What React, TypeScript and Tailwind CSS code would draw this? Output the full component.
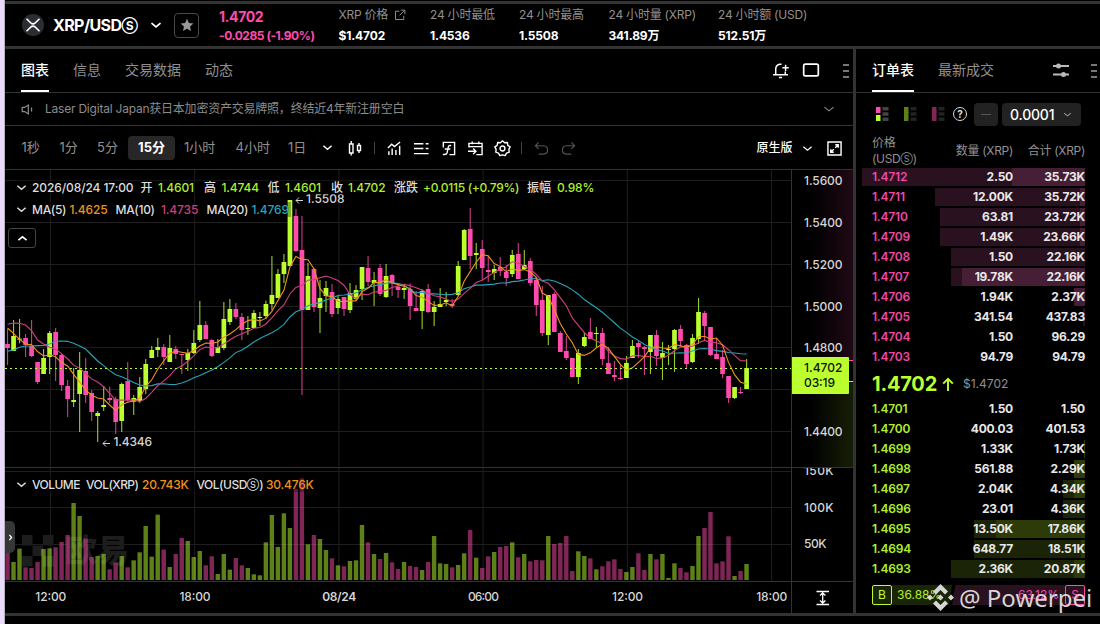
import type { ReactNode } from "react";

type Candle = [dir: "u" | "d", top: number, bottom: number, high: number, low: number];

const UP = "#bcff2f";
const DOWN = "#ff4bae";

// Units are thirds of a pixel, measured from each segment's own base line.
const SEGMENTS: { base: number; rows: Candle[] }[] = [
    { base: 390, rows: [
        ["d", 132, 144, 88, 195], ["u", 108, 153, 60, 153], ["u", 116, 119, 57, 130], ["d", 114, 135, 102, 171], ["d", 138, 168, 60, 171],
        ["d", 186, 246, 186, 252], ["u", 174, 222, 147, 222], ["u", 99, 171, 93, 222], ["d", 96, 165, 84, 243], ["d", 165, 255, 160, 273],
        ["d", 258, 297, 240, 351], ["u", 300, 306, 204, 321], ["u", 210, 282, 156, 396], ["d", 213, 285, 174, 309], ["d", 279, 336, 270, 363],
        ["u", 339, 348, 333, 426], ["u", 315, 321, 258, 333], ["d", 294, 300, 260, 309], ["d", 297, 366, 290, 402], ["u", 252, 363, 248, 396],
        ["d", 243, 300, 186, 305], ["u", 294, 305, 285, 345], ["u", 261, 303, 231, 309], ["u", 192, 267, 177, 282], ["u", 150, 174, 138, 174],
        ["u", 141, 150, 114, 171], ["d", 141, 171, 132, 195], ["u", 144, 186, 105, 186], ["d", 147, 162, 138, 177], ["d", 162, 165, 162, 222],
        ["u", 159, 180, 147, 213], ["u", 129, 159, 90, 162], ["u", 75, 120, 3, 126], ["d", 75, 117, 63, 117], ["d", 120, 168, 117, 171],
        ["u", 141, 159, 117, 159], ["u", 57, 144, 6, 150], ["u", 27, 66, -3, 75], ["d", 27, 51, 9, 57], ["d", 51, 90, 39, 120],
        ["u", 84, 87, 48, 105], ["u", 39, 84, 30, 84],
    ] },
    { base: 30, rows: [
        ["u", 411, 414, 396, 438], ["u", 372, 408, 362, 417], ["u", 345, 372, 228, 390], ["u", 282, 354, 267, 354], ["u", 246, 282, 222, 309],
        ["u", 60, 258, 60, 258], ["d", 108, 213, 87, 216], ["d", 210, 390, 108, 645], ["u", 288, 390, 249, 390], ["d", 267, 381, 264, 396],
        ["u", 354, 384, 300, 459], ["u", 324, 348, 303, 396], ["d", 336, 402, 312, 411], ["u", 357, 384, 345, 402], ["d", 351, 387, 351, 408],
        ["u", 339, 390, 309, 399], ["u", 330, 357, 315, 363], ["u", 261, 327, 261, 360], ["d", 264, 306, 228, 318], ["u", 300, 309, 276, 378],
        ["d", 264, 342, 252, 348], ["u", 288, 351, 252, 354], ["d", 285, 309, 282, 348], ["d", 321, 330, 315, 354], ["u", 324, 330, 315, 357],
        ["d", 327, 378, 310, 420], ["d", 384, 393, 333, 393], ["u", 333, 393, 327, 447], ["d", 327, 396, 312, 399], ["u", 381, 396, 363, 438],
        ["u", 372, 381, 324, 381], ["u", 360, 366, 336, 378], ["d", 372, 378, 357, 384], ["u", 258, 345, 243, 348], ["u", 150, 240, 147, 240],
        ["d", 147, 228, 84, 267], ["u", 219, 225, 189, 267], ["d", 207, 264, 180, 300], ["d", 270, 276, 228, 306], ["u", 267, 279, 255, 300],
        ["d", 261, 273, 231, 288], ["d", 276, 294, 255, 318],
    ] },
    { base: 90, rows: [
        ["u", 165, 222, 150, 231], ["d", 162, 237, 129, 237], ["u", 195, 207, 150, 210], ["d", 183, 249, 174, 258], ["d", 240, 315, 230, 348],
        ["d", 300, 399, 258, 408], ["u", 285, 405, 285, 435], ["d", 282, 396, 276, 396], ["d", 399, 456, 393, 456], ["d", 453, 474, 408, 480],
        ["d", 474, 531, 474, 531], ["u", 459, 531, 447, 552], ["u", 411, 438, 396, 441], ["d", 396, 417, 354, 417], ["u", 399, 402, 381, 441],
        ["d", 399, 477, 384, 495], ["d", 489, 522, 441, 522], ["d", 525, 531, 483, 543], ["d", 534, 537, 495, 540], ["u", 489, 534, 468, 534],
        ["u", 438, 474, 420, 474], ["d", 429, 441, 420, 474], ["d", 441, 447, 438, 525], ["u", 405, 456, 405, 522], ["d", 405, 468, 390, 498],
        ["u", 459, 474, 426, 540], ["u", 447, 450, 435, 495], ["u", 390, 447, 387, 516], ["d", 387, 423, 375, 441], ["d", 435, 492, 432, 504],
        ["u", 414, 486, 402, 489], ["u", 336, 417, 294, 432], ["d", 339, 378, 333, 423], ["d", 381, 465, 381, 468], ["d", 462, 477, 414, 477],
        ["d", 471, 522, 450, 534], ["d", 528, 594, 528, 609], ["u", 561, 594, 561, 597], ["d", 576, 579, 561, 582], ["u", 504, 567, 477, 567],
    ] },
];

// bar heights, also in thirds of a pixel
const VOLUMES = [
    84, 54, 94, 38, 36, 54, 93, 95, 98, 114, 135, 231, 192, 124, 69, 72, 78, 32, 52, 72, 38, 59, 83, 162, 70, 196, 91, 39, 78, 126, 117, 69,
    87, 44, 71, 18, 78, 31, 66, 44, 36, 17, 14, 113, 195, 99, 200, 156, 273, 305, 107, 135, 123, 90, 65, 44, 41, 57, 59, 165, 113, 78, 63, 81,
    53, 33, 54, 42, 39, 30, 54, 132, 50, 48, 38, 45, 80, 150, 67, 36, 71, 84, 99, 102, 113, 68, 78, 56, 60, 59, 132, 108, 111, 132, 27, 86,
    72, 65, 32, 41, 56, 62, 33, 24, 39, 80, 30, 78, 62, 78, 6, 50, 36, 23, 42, 132, 156, 204, 50, 56, 131, 12, 27, 48,
];

const CANDLES = SEGMENTS.flatMap(({ base, rows }) =>
    rows.map(([dir, t, b, h, l]) => ({ dir, top: (t + base) / 3, bottom: (b + base) / 3, high: (h + base) / 3, low: (l + base) / 3 })),
);

const xAt = (i: number) => 2.5 + i * 6.0085;

// The first points of each average depend on candles left of the window.
const MA5_HEAD = [84, 100, 118, 132];
const MA10_HEAD = [73, 69, 70, 75, 92, 120, 132, 142, 148];
const MA20_HEAD = [154, 150, 142, 138, 138, 137, 136, 132, 124, 123, 124, 130, 138, 147, 165, 183, 197, 212, 224];

function average(n: number, head: number[]) {
    return CANDLES.map((_, i) => {
        if (i < n - 1) return `${xAt(i)},${(head[i] + 390) / 3}`;
        const window = CANDLES.slice(i - n + 1, i + 1);
        const y = window.reduce((s, c) => s + (c.dir === "u" ? c.top : c.bottom), 0) / n;
        return `${xAt(i)},${y}`;
    }).join(" ");
}

const PRICE_TICKS = [
    { y: 10.5, label: "1.5600" }, { y: 52.5, label: "1.5400" }, { y: 94.5, label: "1.5200" }, { y: 136.5, label: "1.5000" },
    { y: 177.5, label: "1.4800" }, { y: 219.5, label: "" }, { y: 261.5, label: "1.4400" },
];
const VOL_TICKS = [{ y: 301.5, label: "150K" }, { y: 337.5, label: "100K" }, { y: 374.5, label: "50K" }];
const TIME_TICKS = ["12:00", "18:00", "08/24", "06:00", "12:00", "18:00"];

function Icon({ size = 16, sw = 1.5, className = "", children }: { size?: number; sw?: number; className?: string; children: ReactNode }) {
    return (
        <svg width={size} height={size} viewBox="0 0 16 16" fill="none" stroke="currentColor" strokeWidth={sw} className={`shrink-0 ${className}`}>{children}</svg>
    );
}

function Chevron({ className = "", size = 12, sw = 2 }: { className?: string; size?: number; sw?: number }) {
    return <Icon size={size} sw={sw} className={className}><path d="M2 5.5l6 5 6-5" /></Icon>;
}

// the circled S is far larger than its neighbours at the same font size
function Usd() {
    return <>USD<span className="inline-block align-[0.06em] text-[0.74em] leading-none tracking-normal">Ⓢ</span></>;
}

function Grip() {
    return (
        <div className="flex w-1.5 shrink-0 flex-col gap-1">
            <i className="h-0.5 bg-[#777]" /><i className="h-0.5 bg-[#777]" /><i className="h-0.5 bg-[#777]" />
        </div>
    );
}

function Stat({ label, value, w, link }: { label: string; value: string; w: string; link?: boolean }) {
    return (
        <div className={`shrink-0 ${w}`}>
            <div className="flex h-5 items-center gap-1.5 text-[12px] tracking-[-0.22px] text-[#909090]">
                {label}
                {link && <Icon size={12} sw={1.3}><path d="M7 3H2v11h11V9M9 1.5h5.5V7M14 2L7.5 8.5" /></Icon>}
            </div>
            <div className="h-5 text-[12px] leading-[21px] font-bold tracking-[-0.15px] text-white">{value}</div>
        </div>
    );
}

function Header() {
    return (
        <header className="flex h-[42px] items-center pl-[17px]">
            <svg width="22" height="22" viewBox="0 0 22 22" className="shrink-0">
                <circle cx="11" cy="11" r="11" fill="#2b2d33" />
                <path d="M4.5 4.8l4.2 4.1q2.3 2 4.6 0l4.2-4.1M4.5 17.2l4.2-4.1q2.3-2 4.6 0l4.2 4.1" fill="none" stroke="#fff" strokeWidth="1.5" />
            </svg>
            <div className="ml-[9px] w-[97px] text-[16px] font-bold tracking-[-0.6px] whitespace-nowrap text-white">XRP/<Usd /></div>
            <Chevron className="text-white" size={12} sw={2.4} />
            <div className="ml-3 flex size-[25px] shrink-0 items-center justify-center rounded border border-[#484848]">
                <svg width="14" height="14" viewBox="0 0 16 16" fill="#999"><path d="M8 .8l2.2 4.8 5.1.6-3.8 3.5 1 5.2L8 12.3l-4.5 2.6 1-5.2L.7 6.2l5.1-.6z" /></svg>
            </div>
            <div className="ml-5 w-[119.5px] shrink-0 font-bold text-[#ff4bae]">
                <div className="h-5 text-[14px] leading-[23px] tracking-[-0.35px]">1.4702</div>
                <div className="h-5 text-[12px] leading-[21px] tracking-[-0.45px]">-0.0285 (-1.90%)</div>
            </div>
            <Stat w="w-[91.5px]" label="XRP 价格" value="$1.4702" link />
            <Stat w="w-[89px]" label="24 小时最低" value="1.4536" />
            <Stat w="w-[89.5px]" label="24 小时最高" value="1.5508" />
            <Stat w="w-[109.5px]" label="24 小时量 (XRP)" value="341.89万" />
            <Stat w="w-[100px]" label="24 小时额 (USD)" value="512.51万" />
        </header>
    );
}

function ChartTabs() {
    return (
        <div className="flex h-[44px] items-center border-b border-[#333] pl-4 text-[14px] text-[#909090]">
            <div className="flex h-full w-7 items-center border-b-2 border-white font-medium text-white">图表</div>
            <div className="mb-[3px] ml-6">信息</div>
            <div className="mb-[3px] ml-6">交易数据</div>
            <div className="mb-[3px] ml-6">动态</div>
            <div className="mr-1 ml-auto flex items-center text-white">
                <Icon size={17} sw={1.4} className="-mt-px"><path d="M9 2.200C5.500 1.500 3.500 4 3.500 6.500V12M12.500 9v3M1 12h14M6.500 14.500h3M12.800 2.500v6M9.800 5.500h6" /></Icon>
                <Icon size={18} sw={1.5} className="-mt-px ml-[13px]"><rect x="1.5" y="2.7" width="13" height="10.6" rx="1.5" /></Icon>
                <div className="ml-[23px]"><Grip /></div>
            </div>
        </div>
    );
}

function Notice() {
    return (
        <div className="flex h-[33px] items-center border-b border-[#333] pl-4 text-[#8c8c8c]">
            <Icon size={13} sw={1.5}><path d="M1.500 5.500h3l4.500-3v11l-4.500-3h-3zM13 5.500v5" /></Icon>
            <span className="ml-[11px] text-[12px] tracking-[-0.22px]">Laser Digital Japan获日本加密资产交易牌照，终结近4年新注册空白</span>
            <Chevron className="mr-[18px] ml-auto" size={12} sw={1.5} />
        </div>
    );
}

function Toolbar() {
    return (
        <div className="flex h-[44px] items-center border-b border-[#333] text-[13px] text-[#909090]">
            <span className="box-content w-[38px] pl-[16.5px]">1秒</span>
            <span className="w-[37.5px]">1分</span>
            <span className="w-[31px]">5分</span>
            <span className="flex h-6 w-[47px] items-center justify-center rounded bg-[#272727] font-bold text-white">15分</span>
            <span className="box-content w-[51.5px] pl-[9px]">1小时</span>
            <span className="w-[52.5px]">4小时</span>
            <span className="w-[34px]">1日</span>
            <Chevron className="text-white" size={11} sw={2.2} />
            <div className="mt-px ml-[14px] flex items-center text-white">
                <Icon size={16} sw={1.4}><path d="M2.500 4h3.500v9H2.500zM4.200 1v3M4.200 13v2.500M10.500 5.500h3v5h-3zM12 3v2.500M12 10.500V13" /></Icon>
                <i className="mr-3 ml-[11px] h-3 w-px bg-[#444]" />
                <Icon size={15}><path d="M1 7.500l4-4 3 2.500 6-5M2 15v-4M5.500 15V8M9.500 15V9.500M13.500 15V5" /></Icon>
                <Icon size={15} className="ml-3"><path d="M0 3h10M12.500 3h3M0 8h10M12.500 8h3M0 13.500h15.500" /></Icon>
                <Icon size={15} className="ml-3"><path d="M2.500 7V1.500h12v13H9M10.800 5q-2.500-.8-3 1.500L6.500 12.500q-.8 2.500-4.500 1.700M4 8.500h6" /></Icon>
                <Icon size={15} className="ml-3"><path d="M1 7V2.500h14v12H9M4.500 .5v3M11.500 .5v3M1 6h14M0 11h8M5.500 8l3 3-3 3" /></Icon>
                <Icon size={17} sw={1.3} className="ml-[11px]">
                    <path d="M8 .8l2 1.800 2.600-.2.400 2.600 2.200 1.500L14 8.800l.300 2.700-2.500.900-1.300 2.300L8 14l-2.500.700-1.300-2.300-2.500-.900.300-2.700L.8 6.500 3 5l.4-2.600 2.600.2z" strokeLinejoin="round" />
                    <circle cx="8" cy="8" r="2.300" />
                </Icon>
                <i className="mr-3 ml-2.5 h-3 w-px bg-[#444]" />
                <Icon size={15} sw={1.2} className="text-[#555]"><path d="M5 1.500L1.500 5 5 8.500M1.500 5H10q4.500.3 4.500 4.500T10 14H5" /></Icon>
                <Icon size={15} sw={1.2} className="ml-3 text-[#555]"><path d="M11 1.500L14.500 5 11 8.500M14.500 5H6q-4.500.3-4.500 4.500T6 14h5" /></Icon>
            </div>
            <div className="mt-px mr-[11.5px] ml-auto flex items-center text-white">
                <span className="text-[12px] font-medium">原生版</span>
                <Chevron className="ml-[9px]" size={11} sw={1.8} />
                <Icon size={15} className="ml-[14px]" sw={1.5}><path d="M1 1h14v14H1zM8.800 4h3.200v3.200M12 4L8.800 7.200M7.200 12H4V8.800M4 12l3.200-3.200" /></Icon>
            </div>
        </div>
    );
}

type Cell = { t: ReactNode; w: string; c?: string };

function Legend({ cells }: { cells: Cell[] }) {
    return (
        <div className="flex h-[15px] w-max items-center bg-black/30 text-[12px] font-medium whitespace-nowrap text-[#dedede]">
            <Chevron size={11} sw={2.2} className="mr-[5.500px]" />
            {cells.map(({ t, w, c = "" }, i) => <span key={i} className={`${w} ${c}`}>{t}</span>)}
        </div>
    );
}

const G = "tracking-[-0.15px] text-[#b0ee2e]";

function Chart() {
    return (
        <div className="relative h-[443px]">
            <svg width="848" height="443" viewBox="0 0 848 443" className="block">
                <defs>
                    <linearGradient id="ask"><stop offset="0.3" stopColor={DOWN} stopOpacity="0" /><stop offset="1" stopColor={DOWN} stopOpacity="0.12" /></linearGradient>
                    <linearGradient id="bid"><stop offset="0.3" stopColor={UP} stopOpacity="0" /><stop offset="1" stopColor={UP} stopOpacity="0.12" /></linearGradient>
                </defs>
                <rect x="787" width="61" height="191" fill="url(#ask)" />
                <rect x="787" y="211" width="61" height="86" fill="url(#bid)" />
                <path d="M844 190.500h4" stroke={DOWN} />
                <path d="M844 211.500h4" stroke={UP} />

                <g stroke="#1e1e1e">
                    {[...PRICE_TICKS, ...VOL_TICKS].map(({ y }) => <path key={y} d={`M0 ${y}H786`} />)}
                    {TIME_TICKS.map((_, k) => <path key={k} d={`M${45.5 + k * 144.2} 0V411`} />)}
                </g>

                <g fill="#1d1d1d">
                    <path d="M17 365h10.500v10.500H17zM38 365h10.500v10.500H38zM27.500 375.500H38V386H27.500zM17 386h10.500v10.500H17zM38 386h10.500v10.500H38z" />
                    <text x="60" y="392" fontSize="32" fontWeight="900">欧易</text>
                </g>

                {CANDLES.map((c, i) => (
                    <rect key={i} x={xAt(i) - 2.2} y={410 - VOLUMES[i] / 3} width="4.4" height={VOLUMES[i] / 3} fill={c.dir === "u" ? UP : DOWN} opacity="0.5" />
                ))}

                <path d="M0 297.500H848M0 411.500H848M786.500 0V443" stroke="#333" />

                {CANDLES.map((c, i) => (
                    <g key={i} fill={c.dir === "u" ? UP : DOWN}>
                        <rect x={xAt(i) - 0.5} y={c.high} width="1.1" height={c.low - c.high} opacity="0.8" />
                        <rect x={xAt(i) - 2.3} y={c.top} width="4.7" height={Math.max(1, c.bottom - c.top)} />
                    </g>
                ))}

                <g fill="none" strokeWidth="1.1">
                    <polyline points={average(20, MA20_HEAD)} stroke="#24a5b8" />
                    <polyline points={average(10, MA10_HEAD)} stroke="#cf3f7c" />
                    <polyline points={average(5, MA5_HEAD)} stroke="#f0931e" />
                </g>
                <path d="M0 198.500H786" stroke={UP} strokeDasharray="2 3" />

                <g fill="#d6d6d6" fontSize="12" fontWeight="500">
                    <path d="M291 30.500h7M294 27.500l-3 3 3 3M98 273.500h7M101 270.500l-3 3 3 3" fill="none" stroke="#d6d6d6" />
                    <text x="301" y="33" textLength="38.500">1.5508</text>
                    <text x="108.500" y="276" textLength="38.500">1.4346</text>
                    {PRICE_TICKS.map(({ y, label }) => <text key={y} x="799" y={y + 4.500} textLength="38.500">{label}</text>)}
                    <text x="799" y="342" textLength="29.500">100K</text>
                    <text x="799" y="378" textLength="22.500">50K</text>
                    <clipPath id="volClip"><path d="M787 298h61v50h-61z" /></clipPath>
                    <text x="799" y="305" textLength="29.500" clipPath="url(#volClip)">150K</text>
                    {TIME_TICKS.map((t, k) => <text key={k} x={45.8 + k * 144.2} y="431" textAnchor="middle" textLength={k === 2 ? 34 : 31} fontWeight={k === 2 ? 600 : 500}>{t}</text>)}
                </g>

                <path d="M787 187h56a1 1 0 0 1 1 1v35a1 1 0 0 1-1 1h-56z" fill={UP} />
                <g fill="#111" fontSize="12" fontWeight="500">
                    <text x="799" y="202" textLength="38.500">1.4702</text>
                    <text x="799" y="217" textLength="31">03:19</text>
                </g>
                <path d="M811.500 421.500h12.500M811.500 434.500h12.500M817.700 423v10M815 425.500l2.700-2.500 2.700 2.500M815 430.500l2.700 2.500 2.700-2.500" stroke="#fff" strokeWidth="1.300" fill="none" />
            </svg>

            <div className="absolute top-[10px] left-[10.5px]">
                <Legend cells={[
                    { t: "2026/08/24 17:00", w: "w-[108.5px] tracking-[-0.1px]" }, { t: "开", w: "w-[17.5px]" }, { t: "1.4601", w: "w-[46px]", c: G },
                    { t: "高", w: "w-[17.5px]" }, { t: "1.4744", w: "w-[46px]", c: G }, { t: "低", w: "w-[17.5px]" }, { t: "1.4601", w: "w-[46px]", c: G },
                    { t: "收", w: "w-[17px]" }, { t: "1.4702", w: "w-[46px]", c: G }, { t: "涨跌", w: "w-[29px]" },
                    { t: "+0.0115 (+0.79%)", w: "w-[104px]", c: "tracking-[-0.3px] text-[#b0ee2e]" }, { t: "振幅", w: "w-[30px]" }, { t: "0.98%", w: "w-[40px]", c: G },
                ]} />
            </div>
            <div className="absolute top-[32px] left-[10.5px]">
                <Legend cells={[
                    { t: "MA(5)", w: "w-[37.500px] tracking-[-0.3px]" }, { t: "1.4625", w: "w-[46px]", c: "tracking-[-0.15px] text-[#f0931e]" },
                    { t: "MA(10)", w: "w-[45.5px] tracking-[-0.3px]" }, { t: "1.4735", w: "w-[45.5px]", c: "tracking-[-0.15px] text-[#cf3f7c]" },
                    { t: "MA(20)", w: "w-[45px] tracking-[-0.3px]" }, { t: "1.4769", w: "w-[39px]", c: "tracking-[-0.15px] text-[#24a5b8]" },
                ]} />
            </div>
            <div className="absolute top-[307px] left-[10.5px]">
                <Legend cells={[
                    { t: "VOLUME", w: "w-[54px] tracking-[-0.55px]" }, { t: "VOL(XRP)", w: "w-[56px] tracking-[-0.55px]" }, { t: "20.743K", w: "w-[54.5px]", c: "tracking-[-0.2px] text-[#f0931e]" },
                    { t: <>VOL(<Usd />)</>, w: "w-[69.5px] tracking-[-0.5px]" }, { t: "30.476K", w: "w-[48px]", c: "tracking-[-0.2px] text-[#f0931e]" },
                ]} />
            </div>
            <div className="absolute top-[58px] left-[3px] flex h-5 w-7 items-center justify-center rounded-[3px] border border-[#444] bg-black text-white">
                <Chevron className="rotate-180" size={11} sw={2.4} />
            </div>
            <div className="absolute top-[351px] left-0 flex h-8 w-[10px] items-center justify-center rounded-r-[5px] bg-[#363636] text-white">
                <Chevron className="-rotate-90" size={7} sw={3} />
            </div>
        </div>
    );
}

type Level = { price: string; amount: string; total: string; depth: number; hot: number };

const ASKS: Level[] = [
    { price: "1.4712", amount: "2.50", total: "35.73K", depth: 223, hot: 73 },
    { price: "1.4711", amount: "12.00K", total: "35.72K", depth: 150, hot: 5 },
    { price: "1.4710", amount: "63.81", total: "23.72K", depth: 145, hot: 5 },
    { price: "1.4709", amount: "1.49K", total: "23.66K", depth: 145, hot: 5 },
    { price: "1.4708", amount: "1.50", total: "22.16K", depth: 134, hot: 0 },
    { price: "1.4707", amount: "19.78K", total: "22.16K", depth: 134, hot: 123 },
    { price: "1.4706", amount: "1.94K", total: "2.37K", depth: 11, hot: 11 },
    { price: "1.4705", amount: "341.54", total: "437.83", depth: 2, hot: 0 },
    { price: "1.4704", amount: "1.50", total: "96.29", depth: 0, hot: 0 },
    { price: "1.4703", amount: "94.79", total: "94.79", depth: 0, hot: 0 },
];

const BIDS: Level[] = [
    { price: "1.4701", amount: "1.50", total: "1.50", depth: 0, hot: 0 },
    { price: "1.4700", amount: "400.03", total: "401.53", depth: 0, hot: 0 },
    { price: "1.4699", amount: "1.33K", total: "1.73K", depth: 1, hot: 1 },
    { price: "1.4698", amount: "561.88", total: "2.29K", depth: 11, hot: 11 },
    { price: "1.4697", amount: "2.04K", total: "4.34K", depth: 22, hot: 11 },
    { price: "1.4696", amount: "23.01", total: "4.36K", depth: 22, hot: 0 },
    { price: "1.4695", amount: "13.50K", total: "17.86K", depth: 111, hot: 89 },
    { price: "1.4694", amount: "648.77", total: "18.51K", depth: 111, hot: 4 },
    { price: "1.4693", amount: "2.36K", total: "20.87K", depth: 134, hot: 11 },
];

function Row({ level, side }: { level: Level; side: "ask" | "bid" }) {
    const ask = side === "ask";
    return (
        <div className="relative mb-0.5 flex h-[18px] shrink-0 items-center pr-[15px] pl-4 text-[12px] font-bold tracking-[-0.2px] text-[#e8e8e8]">
            <i className={`absolute right-[15px] h-full ${ask ? "bg-[#2a1120]" : "bg-[#1c2407]"}`} style={{ width: level.depth }} />
            <i className={`absolute right-[15px] h-full ${ask ? "bg-[#461e35]" : "bg-[#2d3b08]"}`} style={{ width: level.hot }} />
            <span className={`relative w-[60px] font-semibold ${ask ? "text-[#f048a5]" : "text-[#b0ee2e]"}`}>{level.price}</span>
            <span className="relative w-[81px] text-right">{level.amount}</span>
            <span className="relative w-[72px] text-right">{level.total}</span>
        </div>
    );
}

function BookIcon({ top, bottom, dim }: { top: string; bottom: string; dim?: boolean }) {
    return (
        <svg width="13" height="14" viewBox="0 0 13 14" className="shrink-0">
            <path d="M0 0h4.500v6H0z" fill={top} />
            <path d={dim ? "M0 5h4.500v9H0z" : "M0 8h4.500v6H0z"} fill={bottom} />
            <path d="M6.500 0h6v3.500h-6zM6.500 5.200h6v3.500h-6zM6.500 10.500h6V14h-6z" fill={dim ? "#222" : "#444"} />
        </svg>
    );
}

function OrderBook() {
    return (
        <aside className="flex w-[244px] shrink-0 flex-col">
            <div className="flex h-[44px] shrink-0 items-center border-b border-[#333] pl-4 text-[14px] whitespace-nowrap text-[#909090]">
                <div className="flex h-full w-[42px] items-center border-b-2 border-white font-medium text-white">订单表</div>
                <div className="mb-[3px] ml-6 w-[56px]">最新成交</div>
                <Icon size={16} sw={2} className="-mt-0.5 ml-[59px] text-[#bbb]"><path d="M0 4h16M0 12.500h16" /><circle cx="5.500" cy="4" r="1.500" fill="currentColor" /><circle cx="10.500" cy="12.500" r="1.500" fill="currentColor" /></Icon>
                <div className="ml-[22px]"><Grip /></div>
            </div>

            <div className="flex h-[42px] shrink-0 items-center pl-5">
                <BookIcon top={DOWN} bottom={UP} />
                <span className="ml-[15px]"><BookIcon top="#5e8018" bottom="#5e8018" dim /></span>
                <span className="ml-[15px]"><BookIcon top="#802657" bottom="#802657" dim /></span>
                <div className="ml-2 flex size-[14px] items-center justify-center rounded-full border-[1.5px] border-[#ddd] text-[10px] font-bold text-[#ddd]">?</div>
                <div className="ml-[7px] flex h-[23px] w-6 items-center justify-center rounded bg-[#222]"><i className="h-px w-2.5 bg-[#555]" /></div>
                <div className="ml-1 flex h-[23px] w-[79px] items-center justify-between rounded bg-[#222] pr-[9px] pl-2 text-[14px] font-medium tracking-[-0.2px] text-white">
                    0.0001<Chevron size={9} sw={1.8} className="text-[#999]" />
                </div>
            </div>

            <div className="mb-0.5 flex h-[31px] shrink-0 items-center pr-[15px] pl-4 text-[12px] leading-4 tracking-[-0.3px] whitespace-nowrap text-[#909090]">
                <span className="w-[60px]">价格<br />(<Usd />)</span>
                <span className="w-[81px] text-right">数量 (XRP)</span>
                <span className="w-[72px] text-right">合计 (XRP)</span>
            </div>

            {ASKS.map((l) => <Row key={l.price} level={l} side="ask" />)}

            <div className="flex h-8 shrink-0 items-center pl-4">
                <span className="w-[69px] text-[20px] font-bold tracking-[-0.2px] text-[#bcff2f]">1.4702</span>
                <Icon size={14} sw={2.2} className="text-[#bcff2f]"><path d="M8 16V2M2.500 7.500L8 2l5.500 5.500" /></Icon>
                <span className="ml-2 text-[12px] text-[#909090]">$1.4702</span>
            </div>

            {BIDS.map((l) => <Row key={l.price} level={l} side="bid" />)}

            <div className="relative mt-[5px] mr-[15px] ml-4 flex h-5 shrink-0 items-center text-[12px]">
                <div className="flex size-5 shrink-0 items-center justify-center rounded-[2px] border border-[#bcff2f] bg-[#1c2407] text-[#bcff2f]">B</div>
                <div className="flex h-full w-[60px] items-center bg-[#1c2407] pl-[5px] text-[#b0ee2e] [clip-path:polygon(0_0,100%_0,95%_100%,0_100%)]">36.88%</div>
                <div className="flex h-full flex-1 items-center justify-end bg-[#2a1120] pr-1.5 text-[#f048a5] [clip-path:polygon(3%_0,100%_0,100%_100%,0_100%)]">63.12%</div>
                <div className="flex size-5 shrink-0 items-center justify-center rounded-[2px] border border-[#ff4bae] bg-[#2a1120] text-[#ff4bae]">S</div>

                <div className="absolute top-[-1px] left-[55px] flex items-center whitespace-nowrap text-[#d6d6d6]">
                    <svg width="27" height="27" viewBox="0 0 27 27" fill="currentColor" className="shrink-0">
                        <path d="M13.500 0l7.500 7.500-3 3-4.500-4.500L9 10.500l-3-3zM3 10.500l3 3-3 3-3-3zM24 10.500l3 3-3 3-3-3zM13.500 10.500l3 3-3 3-3-3zM6 19.500l3-3 4.500 4.500 4.500-4.500 3 3-7.500 7.500z" />
                    </svg>
                    <span className="ml-[5px] font-['Noto_Sans'] text-[24px] leading-[27px]">@ Powerpei</span>
                </div>
            </div>
        </aside>
    );
}

export default function App() {
    return (
        <div className="flex h-[624px] w-[1100px] overflow-hidden bg-black font-[Inter,'Noto_Sans_CJK_SC',sans-serif]">
            <div className="w-[5px] shrink-0 border-r border-[#b9b0c4] bg-[#e9dcf8]" />
            <div className="min-w-0 flex-1 pt-px">
                <div className="h-[3px] bg-[#333]" />
                <Header />
                <div className="h-[3px] bg-[#333]" />
                <div className="flex h-[564px]">
                    <main className="w-[848px] shrink-0">
                        <ChartTabs />
                        <Notice />
                        <Toolbar />
                        <Chart />
                    </main>
                    <div className="w-[3px] shrink-0 bg-[#333]" />
                    <OrderBook />
                </div>
                <div className="h-[3px] bg-[#333]" />
            </div>
        </div>
    );
}
